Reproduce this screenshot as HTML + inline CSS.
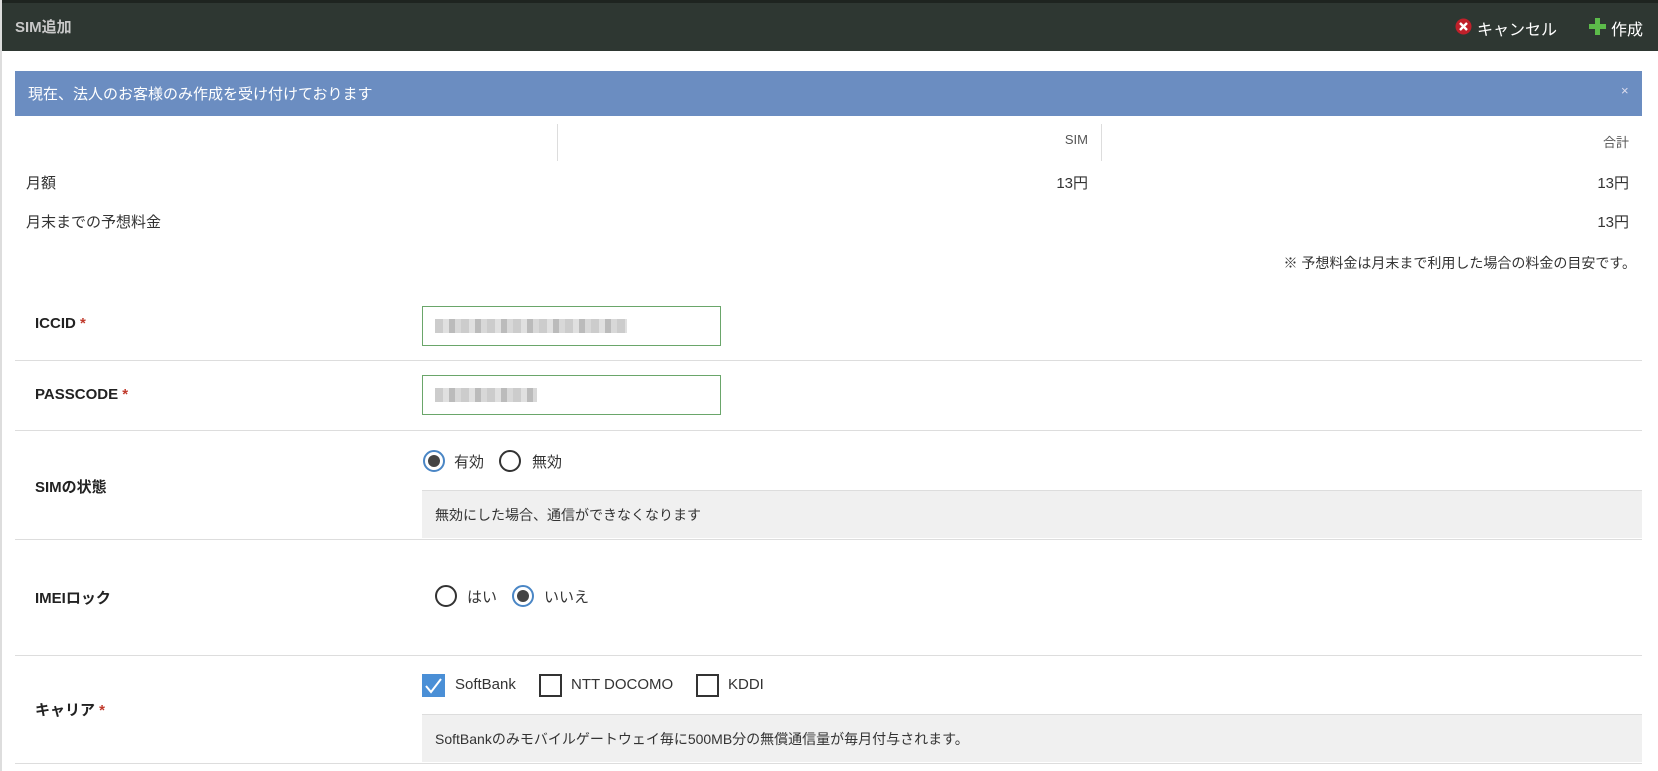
<!DOCTYPE html>
<html><head><meta charset="utf-8"><style>
*{box-sizing:border-box;margin:0;padding:0}
body{width:1658px;height:771px;overflow:hidden;background:#fff;font-family:"Liberation Sans","Noto Sans CJK JP",sans-serif;font-size:14px;color:#333;position:relative;border-left:2px solid #ddd}
.a{position:absolute}
.hdr{left:0;top:0;width:1658px;height:51px;background:#2e3732;border-top:3px solid #1e2420}
.t{white-space:nowrap}
.line{position:absolute;left:13px;width:1627px;height:1px;background:#ddd}
.lbl{font-weight:bold;font-size:15px;color:#222}
.req{color:#c0392b}
.inp{position:absolute;left:420px;width:299px;height:40px;border:1px solid #6aa66a;background:#fff}
.blur{position:absolute;top:12px;left:12px;height:14px;background:repeating-linear-gradient(90deg,#ccc 0 8px,#e0e0e0 8px 14px,#bbb 14px 20px,#d8d8d8 20px 26px)}
.radio{position:absolute;width:22px;height:22px;border-radius:50%;border:2px solid #333;background:#fff}
.radio.on{border:2px solid #4a86c5}
.radio.on:after{content:"";position:absolute;left:3px;top:3px;width:12px;height:12px;border-radius:50%;background:#444}
.box{position:absolute;left:420px;width:1220px;background:#f0f0f0;border-top:1px solid #ddd}
.cb{position:absolute;width:23px;height:23px;border:2px solid #333;background:#fff}
</style></head><body>
<div class="a hdr"></div>
<div class="a t" style="left:13px;top:16px;color:#c8c8c8;font-weight:bold;font-size:15px">SIM追加</div>
<svg class="a" style="left:1453px;top:18px" width="17" height="17"><circle cx="8.5" cy="8.5" r="8" fill="#c0202a"/><path d="M5 5L12 12M12 5L5 12" stroke="#fff" stroke-width="2.4"/></svg>
<div class="a t" style="left:1475px;top:16px;color:#fff;font-size:16px">キャンセル</div>
<svg class="a" style="left:1586px;top:17px" width="19" height="19"><path d="M7 1h5v6h6v5h-6v6H7v-6H1V7h6z" fill="#5cbb4a"/></svg>
<div class="a t" style="left:1609px;top:16px;color:#fff;font-size:16px">作成</div>

<div class="a" style="left:13px;top:71px;width:1627px;height:45px;background:#6b8dc1"></div>
<div class="a t" style="left:26px;top:83px;color:#fff;font-size:15px">現在、法人のお客様のみ作成を受け付けております</div>
<div class="a t" style="left:1619px;top:83px;color:#dde;font-size:13px">×</div>

<div class="a" style="left:555px;top:124px;width:1px;height:37px;background:#ddd"></div>
<div class="a" style="left:1099px;top:124px;width:1px;height:37px;background:#ddd"></div>
<div class="a t" style="right:570px;top:132px;font-size:13px;color:#555">SIM</div>
<div class="a t" style="right:29px;top:132px;font-size:13px;color:#555">合計</div>
<div class="a t" style="left:24px;top:172px;font-size:15px">月額</div>
<div class="a t" style="right:570px;top:172px;font-size:15px">13円</div>
<div class="a t" style="right:29px;top:172px;font-size:15px">13円</div>
<div class="a t" style="left:24px;top:211px;font-size:15px">月末までの予想料金</div>
<div class="a t" style="right:29px;top:211px;font-size:15px">13円</div>
<div class="a t" style="right:22px;top:253px;font-size:14px">※ 予想料金は月末まで利用した場合の料金の目安です。</div>

<div class="a t lbl" style="left:33px;top:315px">ICCID<span class="req"> *</span></div>
<div class="inp" style="top:306px"><div class="blur" style="width:192px"></div></div>
<div class="line" style="top:360px"></div>
<div class="a t lbl" style="left:33px;top:386px">PASSCODE<span class="req"> *</span></div>
<div class="inp" style="top:375px"><div class="blur" style="width:102px"></div></div>
<div class="line" style="top:430px"></div>

<div class="radio on" style="left:421px;top:450px"></div>
<div class="a t" style="left:452px;top:451px;font-size:15px">有効</div>
<div class="radio" style="left:497px;top:450px"></div>
<div class="a t" style="left:530px;top:451px;font-size:15px">無効</div>
<div class="a t lbl" style="left:33px;top:476px">SIMの状態</div>
<div class="box" style="top:490px;height:48px"></div>
<div class="a t" style="left:433px;top:505px;font-size:14px">無効にした場合、通信ができなくなります</div>
<div class="line" style="top:539px"></div>

<div class="a t lbl" style="left:33px;top:587px">IMEIロック</div>
<div class="radio" style="left:433px;top:585px"></div>
<div class="a t" style="left:465px;top:586px;font-size:15px">はい</div>
<div class="radio on" style="left:510px;top:585px"></div>
<div class="a t" style="left:542px;top:586px;font-size:15px">いいえ</div>
<div class="line" style="top:655px"></div>

<div class="a" style="left:420px;top:674px;width:23px;height:23px;background:#4a8fd6"><svg width="23" height="23"><path d="M4 12l5 6L19 5" stroke="#fff" stroke-width="2" fill="none"/></svg></div>
<div class="a t" style="left:453px;top:676px;font-size:15px">SoftBank</div>
<div class="cb" style="left:537px;top:674px"></div>
<div class="a t" style="left:569px;top:676px;font-size:15px">NTT DOCOMO</div>
<div class="cb" style="left:694px;top:674px"></div>
<div class="a t" style="left:726px;top:676px;font-size:15px">KDDI</div>
<div class="a t lbl" style="left:33px;top:699px">キャリア<span class="req"> *</span></div>
<div class="box" style="top:714px;height:48px"></div>
<div class="a t" style="left:433px;top:729px;font-size:14px">SoftBankのみモバイルゲートウェイ毎に500MB分の無償通信量が毎月付与されます。</div>
<div class="line" style="top:763px"></div>
</body></html>
